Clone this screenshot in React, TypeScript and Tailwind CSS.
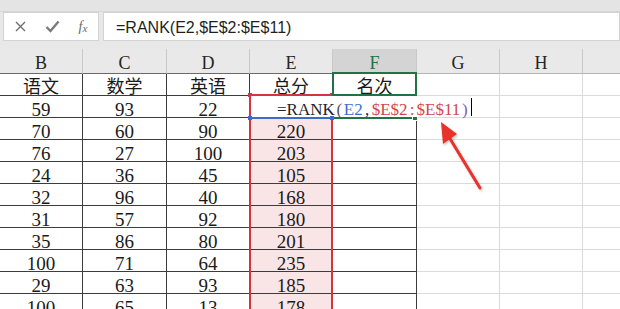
import React from 'react';

const cols = [
  { l: 'B', w: 'w-[83px]' },
  { l: 'C', w: 'w-[84px]' },
  { l: 'D', w: 'w-[83px]' },
  { l: 'E', w: 'w-[83px]' },
  { l: 'F', w: 'w-[84px]' },
  { l: 'G', w: 'w-[83px]' },
  { l: 'H', w: 'w-[83px]' },
  { l: '', w: 'w-[83px]' },
];

const rows: (string | number)[][] = [
  ['语文', '数学', '英语', '总分', '名次'],
  [59, 93, 22, '', ''],
  [70, 60, 90, 220],
  [76, 27, 100, 203],
  [24, 36, 45, 105],
  [32, 96, 40, 168],
  [31, 57, 92, 180],
  [35, 86, 80, 201],
  [100, 71, 64, 235],
  [29, 63, 93, 185],
  [100, 65, 13, 178],
];

const serif = "font-['Liberation_Serif','Noto_Sans_CJK_SC',serif]";

function P({ c, cls }: { c: string; cls: string }) {
  return <span className={`inline-block w-[9px] text-center ${cls}`}>{c}</span>;
}

export default function App() {
  return (
    <div className="relative w-[620px] h-[309px] overflow-hidden bg-white">
      {/* formula area */}
      <div className="h-[49px] bg-[#e8e8e8] flex flex-col">
        <div className="h-[12px] shrink-0 bg-[#e4e4e4] border-b border-[#d6d6d6]" />
        <div className="flex h-[29px] shrink-0 gap-[4px] pl-[3px]">
          <div className="w-[96px] bg-white border border-[#d3d3d3] flex items-center">
            <div className="w-[32px] flex justify-center">
              <svg width="11" height="11" viewBox="0 0 11 11">
                <path d="M1 1 L10 10 M10 1 L1 10" stroke="#6e6e6e" strokeWidth="1.4" fill="none" />
              </svg>
            </div>
            <div className="w-[32px] flex justify-center">
              <svg width="15" height="13" viewBox="0 0 15 13">
                <path d="M1.5 7 L5.5 11 L13.5 1.5" stroke="#7a7a7a" strokeWidth="2.4" fill="none" />
              </svg>
            </div>
            <div className="w-[30px] flex justify-center items-center text-[#6a6a6a] font-['Liberation_Serif',serif] italic">
              <span className="text-[14px]">f</span>
              <span className="text-[11px] mt-[3px]">x</span>
            </div>
          </div>
          <div className="flex-1 bg-white border border-[#d3d3d3] pl-[12px] pt-[3px] flex items-center font-['Liberation_Sans',sans-serif] text-[16px] text-[#1f1f1f]">
            =RANK(E2,$E$2:$E$11)
          </div>
        </div>
      </div>

      {/* column headers */}
      <div className={`flex h-[25px] bg-[#e9e9e9] ${serif}`}>
        {cols.map((c, i) => (
          <div
            key={i}
            className={`${c.w} shrink-0 border-r border-r-[#c9c9c9] border-b ${
              i < 5 ? 'border-b-[#6a6a6a]' : 'border-b-[#b4b4b4]'
            } ${i === 4 ? 'bg-[#d4d4d4] text-[#217346]' : 'text-[#262626]'} flex items-end justify-center pb-[2px] leading-[15px] text-[18px]`}
          >
            {c.l}
          </div>
        ))}
      </div>

      {/* rows */}
      {rows.map((r, ri) => (
        <div key={ri} className={`flex h-[22px] ${serif}`}>
          {cols.map((c, ci) => {
            const v = r[ci];
            const dark = ci < 5;
            const pink = ci === 3 && ri >= 2;
            return (
              <div
                key={ci}
                className={`${c.w} shrink-0 border-r border-b ${
                  dark ? 'border-[#3c3c3c]' : 'border-[#dadada]'
                } ${pink ? 'bg-[#fae5e6]' : 'bg-white'} flex items-end justify-center leading-[15px] ${
                  ri === 0 ? 'text-[18px]' : 'text-[19px]'
                } text-[#1a1a1a]`}
              >
                {v !== undefined && v !== '' ? v : null}
              </div>
            );
          })}
        </div>
      ))}

      {/* red reference range */}
      <div className="absolute left-[249px] top-[94px] w-[84px] h-[240px] border-2 border-[#d2353f]" />
      <div className="absolute left-[248px] top-[93px] w-[4px] h-[4px] bg-[#d2353f]" />
      <div className="absolute left-[330px] top-[93px] w-[4px] h-[4px] bg-[#d2353f]" />

      {/* green active cell borders */}
      <div className="absolute left-[332px] top-[72px] w-[85px] h-[24px] border-2 border-[#217346]" />
      <div className="absolute left-[333px] top-[117px] w-[82px] h-[2px] bg-[#217346]" />
      <div className="absolute left-[412px] top-[115px] w-[6px] h-[6px] bg-[#217346] border border-white" />

      {/* edit box */}
      <div
        className={`absolute left-[251px] top-[96px] w-[222px] h-[21px] bg-white flex items-end pl-[26px] leading-[15px] text-[17px] ${serif}`}
      >
        <span className="text-[#1f1f1f]">=RANK</span>
        <P c="(" cls="text-[#555555]" />
        <span className="text-[#3b6fd4]">E2</span>
        <P c="," cls="text-[#1f1f1f]" />
        <span className="text-[#d3454b]">$E$2</span>
        <P c=":" cls="text-[#d3454b]" />
        <span className="text-[#d3454b]">$E$11</span>
        <P c=")" cls="text-[#7a5fb6]" />
      </div>
      <div className="absolute left-[471px] top-[98px] w-[1px] h-[18px] bg-black" />

      {/* blue reference E2 */}
      <div className="absolute left-[249px] top-[117px] w-[84px] h-[2px] bg-[#3c6cd0]" />
      <div className="absolute left-[248px] top-[116px] w-[4px] h-[4px] bg-[#3c6cd0]" />
      <div className="absolute left-[330px] top-[116px] w-[4px] h-[4px] bg-[#3c6cd0]" />

      {/* arrow */}
      <svg className="absolute left-0 top-0 pointer-events-none" width="620" height="309" viewBox="0 0 620 309">
        <defs>
          <filter id="sh" x="-20%" y="-20%" width="140%" height="140%">
            <feDropShadow dx="1" dy="1.5" stdDeviation="1.2" floodColor="#000" floodOpacity="0.25" />
          </filter>
        </defs>
        <g filter="url(#sh)">
          <line x1="480" y1="188" x2="449" y2="137" stroke="#e8302a" strokeWidth="3" strokeLinecap="round" />
          <polygon points="441,122 457,134 443,144" fill="#e8302a" />
        </g>
      </svg>
    </div>
  );
}
